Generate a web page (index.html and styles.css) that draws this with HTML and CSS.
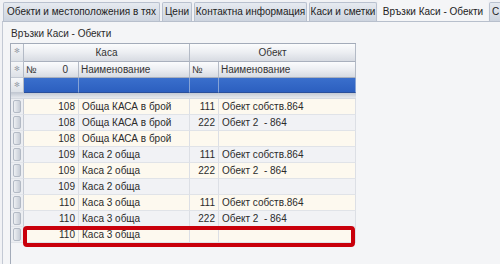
FILE: index.html
```html
<!doctype html>
<html>
	<head>
		<meta http-equiv="Content-Type" content="text/html; charset=utf-8" />
		<title>Връзки Каси - Обекти</title>
		<link rel="stylesheet" href="styles.css">
	</head>
	<body>
		<div class="class___tabs">
			<div class="class___tab class___tab_objects">Обекти и местоположения в тях</div>
			<div class="class___tab class___tab_prices">Цени</div>
			<div class="class___tab class___tab_contacts">Контактна информация</div>
			<div class="class___tab class___tab_cash">Каси и сметки</div>
			<div class="class___tab class___tab_active">Връзки Каси - Обекти</div>
			<div class="class___tab class___tab_staff">С</div>
		</div>
		<div class="class___panel">
			<div class="class___caption">Връзки Каси - Обекти</div>
			<div class="class___grid">
				<div class="class___row class___row_head1">
					<div class="class___ind">&#10043;</div>
					<div class="class___hcell class___span2">Каса</div>
					<div class="class___hcell class___span2">Обект</div>
				</div>
				<div class="class___row class___row_head2">
					<div class="class___ind">&#10043;</div>
					<div class="class___hcell class___hcell_split"><span>№</span><span>0</span></div>
					<div class="class___hcell">Наименование</div>
					<div class="class___hcell">№</div>
					<div class="class___hcell">Наименование</div>
				</div>
				<div class="class___row class___row_new">
					<div class="class___ind">&#10043;</div>
					<div class="class___ncell"></div>
					<div class="class___ncell"></div>
					<div class="class___ncell"></div>
					<div class="class___ncell"></div>
				</div>
				<div class="class___sep"></div>
				<!-- data rows -->
				<div class="class___row class___row_odd">
					<div class="class___ind"><span class="class___btn"></span></div>
					<div class="class___cell class___num">108</div>
					<div class="class___cell">Обща КАСА в брой</div>
					<div class="class___cell class___num">111</div>
					<div class="class___cell">Обект собств.864</div>
				</div>
				<div class="class___row class___row_even">
					<div class="class___ind"><span class="class___btn"></span></div>
					<div class="class___cell class___num">108</div>
					<div class="class___cell">Обща КАСА в брой</div>
					<div class="class___cell class___num">222</div>
					<div class="class___cell">Обект 2&nbsp; - 864</div>
				</div>
				<div class="class___row class___row_odd">
					<div class="class___ind"><span class="class___btn"></span></div>
					<div class="class___cell class___num">108</div>
					<div class="class___cell">Обща КАСА в брой</div>
					<div class="class___cell class___num"></div>
					<div class="class___cell"></div>
				</div>
				<div class="class___row class___row_even">
					<div class="class___ind"><span class="class___btn"></span></div>
					<div class="class___cell class___num">109</div>
					<div class="class___cell">Каса 2 обща</div>
					<div class="class___cell class___num">111</div>
					<div class="class___cell">Обект собств.864</div>
				</div>
				<div class="class___row class___row_odd">
					<div class="class___ind"><span class="class___btn"></span></div>
					<div class="class___cell class___num">109</div>
					<div class="class___cell">Каса 2 обща</div>
					<div class="class___cell class___num">222</div>
					<div class="class___cell">Обект 2&nbsp; - 864</div>
				</div>
				<div class="class___row class___row_even">
					<div class="class___ind"><span class="class___btn"></span></div>
					<div class="class___cell class___num">109</div>
					<div class="class___cell">Каса 2 обща</div>
					<div class="class___cell class___num"></div>
					<div class="class___cell"></div>
				</div>
				<div class="class___row class___row_odd">
					<div class="class___ind"><span class="class___btn"></span></div>
					<div class="class___cell class___num">110</div>
					<div class="class___cell">Каса 3 обща</div>
					<div class="class___cell class___num">111</div>
					<div class="class___cell">Обект собств.864</div>
				</div>
				<div class="class___row class___row_even">
					<div class="class___ind"><span class="class___btn"></span></div>
					<div class="class___cell class___num">110</div>
					<div class="class___cell">Каса 3 обща</div>
					<div class="class___cell class___num">222</div>
					<div class="class___cell">Обект 2&nbsp; - 864</div>
				</div>
				<div class="class___row class___row_odd">
					<div class="class___ind"><span class="class___btn"></span></div>
					<div class="class___cell class___num">110</div>
					<div class="class___cell">Каса 3 обща</div>
					<div class="class___cell class___num"></div>
					<div class="class___cell"></div>
				</div>
				<div class="class___mark"></div>
			</div>
		</div>
	</body>
</html>
```

FILE: styles.css
```css
html, body {
	margin : 0;
	height : 264px;
	overflow : hidden;
}
body {
	background-color : #f1f2f5;
	font-family : "Liberation Sans", Arial, sans-serif;
	font-size : 10px;
	color : #2b2b2b;
	display : flex;
	flex-direction : column;
}
.class___tabs {
	display : flex;
	align-items : flex-end;
	gap : 2px;
	height : 21px;
	padding-left : 3px;
	white-space : nowrap;
	overflow : hidden;
	flex : none;
}
.class___tab {
	flex : none;
	height : 19px;
	line-height : 18px;
	padding : 0;
	box-sizing : border-box;
	text-align : center;
	background : linear-gradient(#e6eaf0, #cdd4df);
	border : 1px solid #b9c1cf;
	border-bottom : none;
	border-radius : 2px 2px 0 0;
	color : #222;
	overflow : hidden;
}
.class___tab_objects {
	width : 157px;
}
.class___tab_prices {
	width : 30px;
}
.class___tab_contacts {
	width : 113px;
}
.class___tab_cash {
	width : 68px;
}
.class___tab_active {
	width : 110px;
	height : 21px;
	line-height : 21px;
	background : #f4f5f7;
	border-color : #f4f5f7;
	margin-left : -1px;
}
.class___tab_staff {
	width : 30px;
	text-align : left;
	padding-left : 2px;
	margin-left : -1px;
}
.class___panel {
	flex : 1;
	display : flex;
	flex-direction : column;
	margin-left : 2px;
	background-color : #f4f5f7;
	border-top : 1px solid #b7bfcc;
	border-left : 1px solid #c3c9d4;
}
.class___caption {
	height : 18px;
	line-height : 18px;
	padding : 3px 0 0 8px;
	flex : none;
}
.class___grid {
	position : relative;
	flex : 1;
	width : 345px;
	margin-left : 7px;
	border-left : 1px solid #a3abb9;
	border-top : 1px solid #a3abb9;
}
.class___row {
	display : grid;
	grid-template-columns : 13px 55px 111px 29px 137px;
	height : 16px;
}
.class___row > div {
	box-sizing : border-box;
	overflow : hidden;
	white-space : nowrap;
}
.class___row_head1 {
	height : 18px;
}
.class___span2 {
	grid-column : span 2;
	text-align : center;
}
.class___ind {
	background : linear-gradient(#f6f7f9, #dde1e7);
	border-right : 1px solid #b3bac6;
	border-bottom : 1px solid #c3c9d3;
	color : #9aa0aa;
	font-family : "DejaVu Sans", sans-serif;
	font-size : 7px;
	text-align : center;
	line-height : 15px;
}
.class___hcell {
	background : linear-gradient(#fbfcfd, #eceef2 50%, #d7dbe2);
	border-right : 1px solid #b3bac6;
	border-bottom : 1px solid #a9b0bd;
	line-height : 15px;
	padding : 0 2px;
	color : #333;
}
.class___row_head1 .class___hcell {
	line-height : 17px;
}
.class___hcell_split {
	display : flex;
	justify-content : space-between;
	padding-right : 10px;
}
.class___row_new {
	height : 15px;
}
.class___ncell {
	background : linear-gradient(#3a6fcc, #2c5fbf);
	border-right : 1px solid #86a3d6;
	border-bottom : 1px solid #2a4f9a;
}
.class___sep {
	height : 6px;
	box-sizing : border-box;
	width : 345px;
	background : linear-gradient(#c4cad4, #e6e9ee);
	border-bottom : 1px solid #d6dae1;
}
.class___cell {
	border-right : 1px solid #dcdfe5;
	border-bottom : 1px solid #e0e3e8;
	line-height : 15px;
	padding : 0 3px;
}
.class___num {
	text-align : right;
}
.class___row_odd > .class___cell {
	background-color : #fdf9ef;
}
.class___row_even > .class___cell {
	background-color : #f1f2f5;
}
.class___row_odd > .class___ind, .class___row_even > .class___ind {
	background : #eceef2;
	border-right : 1px solid #c7ccd5;
	border-bottom : 1px solid #e2e5ea;
	padding : 1px 2px;
}
.class___btn {
	display : block;
	height : 13px;
	box-sizing : border-box;
	border : 1px solid #b3bac5;
	border-radius : 2px;
	background : linear-gradient(90deg, #eef0f3, #c6ccd6);
}
.class___mark {
	position : absolute;
	left : 12px;
	top : 182px;
	width : 332px;
	height : 21px;
	box-sizing : border-box;
	border : 4px solid #c9000b;
	border-radius : 4px;
}
```
